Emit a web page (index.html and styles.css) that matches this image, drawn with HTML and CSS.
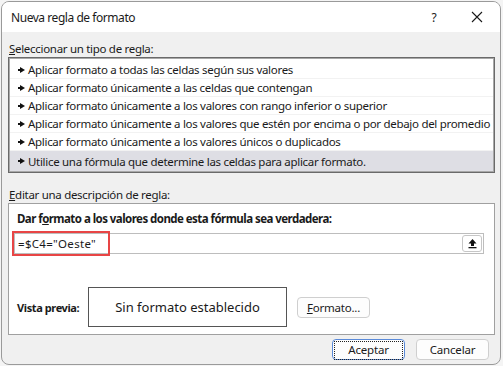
FILE: index.html
```html
<!DOCTYPE html>
<html lang="es">
<head>
  <meta charset="UTF-8" />
  <title>Nueva regla de formato</title>
  <link rel="stylesheet" href="styles.css">
</head>
<body>

<div class="dialog">
  <div class="titlebar">
    <span class="title">Nueva regla de formato</span>
    <span class="help">?</span>
    <span class="close">
      <svg width="12" height="12" viewBox="0 0 12 12"><path d="M1 1 L11 11 M11 1 L1 11" stroke="#1a1a1a" stroke-width="1.1" fill="none"/></svg>
    </span>
  </div>

  <div class="content">
    <div class="label"><u>S</u>eleccionar un tipo de regla:</div>
    <ul class="rules">
      <li><i class="arrow"></i>Aplicar formato a todas las celdas según sus valores</li>
      <li><i class="arrow"></i>Aplicar formato únicamente a las celdas que contengan</li>
      <li><i class="arrow"></i>Aplicar formato únicamente a los valores con rango inferior o superior</li>
      <li><i class="arrow"></i>Aplicar formato únicamente a los valores que estén por encima o por debajo del promedio</li>
      <li><i class="arrow"></i>Aplicar formato únicamente a los valores únicos o duplicados</li>
      <li class="selected"><i class="arrow"></i>Utilice una fórmula que determine las celdas para aplicar formato.</li>
    </ul>

    <div class="label second"><u>E</u>ditar una descripción de regla:</div>
    <div class="desc">
      <div class="desc-title">Dar f<u>o</u>rmato a los valores donde esta fórmula sea verdadera:</div>
      <div class="formula">
        <span class="formula-text">=$C4="Oeste"</span>
        <span class="collapse">
          <svg width="11" height="11" viewBox="0 0 11 11"><path d="M5.5 1 L9.5 5.5 H7 V8 H4 V5.5 H1.5 Z" fill="#111"/><rect x="1.5" y="9" width="8" height="1.3" fill="#111"/></svg>
        </span>
        <span class="highlight"></span>
      </div>
      <div class="preview-row">
        <span class="preview-label">Vista previa:</span>
        <div class="preview">Sin formato establecido</div>
        <button class="btn"><u>F</u>ormato...</button>
      </div>
    </div>

    <div class="actions">
      <button class="btn primary"><span>Aceptar</span></button>
      <button class="btn">Cancelar</button>
    </div>
  </div>
</div>

</body>
</html>
```

FILE: styles.css
```css
body {
  margin: 0;
  background: #f4f4f4;
  font-family: 'Noto Sans', 'Open Sans', sans-serif;
  font-size: 11.5px;
  letter-spacing: -0.3px;
  color: #1a1a1a;
}
.dialog {
  margin: 1px 0 0 1px;
  width: 498px;
  height: 362px;
  border: 1px solid #9a9a9a;
  border-radius: 8px;
  overflow: hidden;
  background: #f0f0f0;
  display: flex;
  flex-direction: column;
}
.titlebar {
  height: 30px;
  background: #fff;
  display: flex;
  align-items: center;
  padding-left: 9px;
}
.title {
  flex: 1;
  font-size: 12px;
  letter-spacing: -0.45px;
}
.help {
  width: 46px;
  text-align: center;
  font-size: 12px;
  margin-right: -3px;
}
.close {
  width: 46px;
  display: flex;
  justify-content: center;
}
.content {
  padding: 0 5px 0 6px;
  display: flex;
  flex-direction: column;
}
.label {
  margin-top: 9px;
  height: 16px;
  line-height: 16px;
  padding-left: 1px;
}
.label.second {
  margin-top: 14px;
}
.rules {
  list-style: none;
  margin: 0;
  border: 1px solid #6a6a6a;
  box-shadow: inset 0 0 0 1px #a8a8a8;
  background: #fff;
  padding: 3px 1px 1px;
}
.rules li {
  height: 17px;
  line-height: 17px;
  border-bottom: 1px solid #f2f2f2;
  padding-left: 8px;
  display: flex;
  align-items: center;
  white-space: nowrap;
}
.rules li:last-child {
  border-bottom: none;
}
.rules li.selected {
  background: #dedee4;
  height: 20px;
}
.arrow {
  flex-shrink: 0;
  display: inline-block;
  width: 5px;
  height: 2px;
  background: #111;
  position: relative;
  margin-right: 5px;
}
.arrow::after {
  content: "";
  position: absolute;
  left: 2px;
  top: -2px;
  border-left: 5px solid #111;
  border-top: 3px solid transparent;
  border-bottom: 3px solid transparent;
}
.desc {
  height: 130px;
  background: #fff;
  border: 1px solid #a0a0a0;
  padding: 0 10px 0 5px;
  display: flex;
  flex-direction: column;
}
.desc-title {
  margin-top: 6px;
  padding-left: 3px;
  font-weight: 700;
  letter-spacing: -0.55px;
  height: 18px;
  line-height: 18px;
}
.formula {
  position: relative;
  margin-top: 5px;
  height: 19px;
  border: 1px solid #bdbdbd;
  display: flex;
  align-items: center;
  justify-content: space-between;
  padding-left: 3px;
}
.formula-text {
  letter-spacing: 0.3px;
}
.collapse {
  width: 18px;
  height: 15px;
  margin-right: 1px;
  border: 1px solid #c6c6c6;
  border-radius: 3px;
  display: flex;
  align-items: center;
  justify-content: center;
}
.highlight {
  position: absolute;
  left: -3px;
  top: -3px;
  width: 94px;
  height: 21px;
  border: 2px solid #e84545;
}
.preview-row {
  margin-top: 33px;
  display: flex;
  align-items: center;
}
.preview-label {
  width: 71px;
  padding-left: 3px;
  font-weight: 700;
  font-size: 11px;
  letter-spacing: -0.4px;
}
.preview {
  width: 197px;
  height: 38px;
  border: 1px solid #555;
  display: flex;
  align-items: center;
  justify-content: center;
  font-size: 13px;
  letter-spacing: 0;
}
.btn {
  font-family: inherit;
  font-size: 11.5px;
  letter-spacing: -0.2px;
  color: #1a1a1a;
  background: #fdfdfd;
  border: 1px solid #cfcfcf;
  border-radius: 4px;
  width: 73px;
  height: 21px;
  padding: 0;
}
.preview-row .btn {
  margin-left: 10px;
}
.actions {
  margin-top: 4px;
  display: flex;
  justify-content: flex-end;
  gap: 11px;
  padding-right: 6px;
}
.btn.primary {
  border-color: #5a8ad8;
  padding: 1px;
}
.btn.primary span {
  display: block;
  height: 100%;
  line-height: 16px;
  border: 1px dotted #222;
}
```
